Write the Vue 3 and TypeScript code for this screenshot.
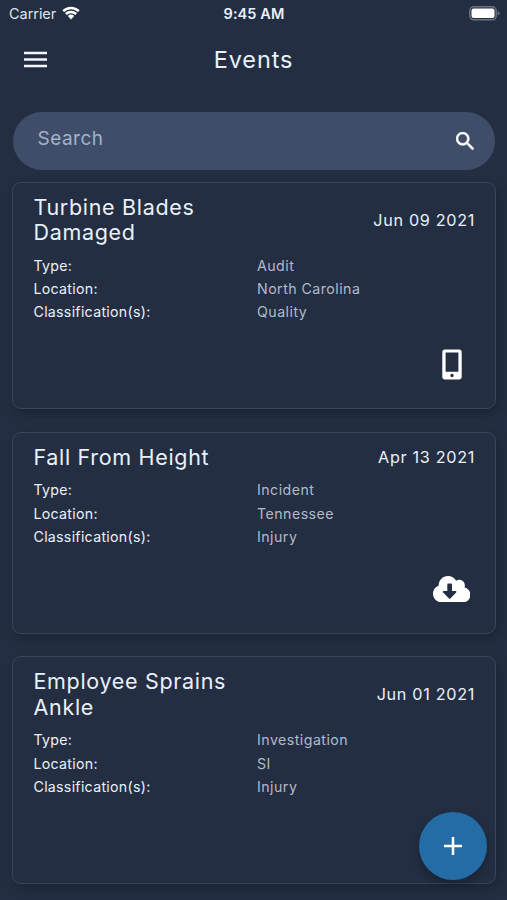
<script setup lang="ts">
interface EventItem {
  title: string[]
  date: string
  type: string
  location: string
  classification: string
  icon: 'phone' | 'cloud' | null
}

const events: EventItem[] = [
  { title: ['Turbine Blades', 'Damaged'], date: 'Jun 09 2021', type: 'Audit', location: 'North Carolina', classification: 'Quality', icon: 'phone' },
  { title: ['Fall From Height'], date: 'Apr 13 2021', type: 'Incident', location: 'Tennessee', classification: 'Injury', icon: 'cloud' },
  { title: ['Employee Sprains', 'Ankle'], date: 'Jun 01 2021', type: 'Investigation', location: 'SI', classification: 'Injury', icon: null },
]
</script>

<template>
  <div class="screen">
    <div class="status">
      <div class="carrier">
        <span>Carrier</span>
        <svg class="wifi" viewBox="0 0 18 14" width="18" height="14">
          <path d="M1.2 5.1a11.2 11.2 0 0 1 15.6 0M3.8 8a7.5 7.5 0 0 1 10.4 0" fill="none" stroke="#fff" stroke-width="2.5" />
          <path d="M9 13.4 5.8 10.1a4.7 4.7 0 0 1 6.4 0z" fill="#fff" />
        </svg>
      </div>
      <div class="clock">9:45 AM</div>
      <svg class="battery" viewBox="0 0 31 15" width="31" height="15">
        <rect x="0.8" y="0.8" width="26.4" height="13" rx="4" fill="none" stroke="#6a7280" stroke-width="1.5" />
        <rect x="2.5" y="2.5" width="23" height="9.6" rx="2" fill="#fff" />
        <path d="M28.6 5v4.6q2-.8 2-2.3t-2-2.3z" fill="#6a7280" />
      </svg>
    </div>

    <header class="navbar">
      <svg class="menu" viewBox="0 0 23 17" width="23" height="17">
        <path d="M0 2h23M0 8.5h23M0 15h23" stroke="#f3f7fc" stroke-width="2.7" />
      </svg>
      <h1>Events</h1>
    </header>

    <div class="search">
      <span>Search</span>
      <svg viewBox="3 3 17.5 17.5" width="18" height="18">
        <path fill="#fff" stroke="#fff" stroke-width="0.5" d="M15.5 14h-.79l-.28-.27A6.471 6.471 0 0 0 16 9.5 6.5 6.5 0 1 0 9.5 16c1.61 0 3.09-.59 4.23-1.57l.27.28v.79l5 4.99L20.49 19l-4.99-5zm-6 0C7.01 14 5 11.99 5 9.5S7.01 5 9.5 5 14 7.01 14 9.5 11.99 14 9.5 14z" />
      </svg>
    </div>

    <main class="list">
      <article v-for="event in events" :key="event.title[0]" class="card">
        <div class="heading">
          <h2><span v-for="line in event.title" :key="line">{{ line }}</span></h2>
          <time>{{ event.date }}</time>
        </div>
        <dl>
          <dt>Type:</dt><dd>{{ event.type }}</dd>
          <dt>Location:</dt><dd>{{ event.location }}</dd>
          <dt>Classification(s):</dt><dd>{{ event.classification }}</dd>
        </dl>
        <div class="state">
          <svg v-if="event.icon === 'phone'" viewBox="0 0 20 31" width="20" height="31">
            <path fill="#fff" fill-rule="evenodd" d="M3 .5h14a2.7 2.7 0 0 1 2.7 2.7v24.6a2.7 2.7 0 0 1-2.7 2.7H3a2.7 2.7 0 0 1-2.7-2.7V3.2A2.7 2.7 0 0 1 3 .5zM3.6 3.5v19.3h12.8V3.5zM10 24.8a1.7 1.7 0 1 0 0 3.4 1.7 1.7 0 0 0 0-3.4z" />
          </svg>
          <svg v-else-if="event.icon === 'cloud'" viewBox="0 0 640 448" width="37.5" height="26.25">
            <path fill="#fff" d="M537.6 194.6c4-10.7 6.4-22.4 6.4-34.6 0-53-43-96-96-96-19.7 0-38.1 6-53.3 16.2C367 32.2 315.3 0 256 0 167.6 0 96 71.6 96 160c0 2.7.1 5.4.2 8.1C40.2 187.8 0 241.2 0 304c0 79.5 64.5 144 144 144h368c70.7 0 128-57.3 128-128 0-61.9-44-113.6-102.4-125.4zM395.3 283.3l-100 100c-6.2 6.2-16.4 6.2-22.6 0l-100-100c-10.1-10.1-2.9-27.3 11.3-27.3h60V144c0-8.8 7.2-16 16-16h48c8.8 0 16 7.2 16 16v112h60c14.2 0 21.4 17.2 11.3 27.3z" />
          </svg>
        </div>
      </article>
    </main>

    <button class="fab" type="button" aria-label="Add event">
      <svg viewBox="0 0 18 18" width="18" height="18">
        <path d="M9 0v18M0 9h18" stroke="#fff" stroke-width="2.5" />
      </svg>
    </button>
  </div>
</template>

<style>
body {
  background: #242e42;
}
</style>

<style scoped>
.screen {
  position: relative;
  box-sizing: border-box;
  width: 507px;
  height: 900px;
  overflow: hidden;
  background: #242e42;
  color: #e9f0f9;
  font-family: Inter, "Liberation Sans", sans-serif;
}

.status {
  display: grid;
  grid-template-columns: 1fr auto 1fr;
  align-items: center;
  height: 27px;
  padding: 0 7px 0 9px;
  font-size: 14.5px;
}

.carrier {
  display: flex;
  align-items: center;
  gap: 6px;
  letter-spacing: -0.05px;
  color: #dce3ec;
}

.wifi {
  margin-top: -1px;
}

.clock {
  margin-right: 1px;
  font-weight: 600;
  letter-spacing: 0.1px;
}

.battery {
  justify-self: end;
}

.navbar {
  display: grid;
  grid-template-columns: 23px 1fr 23px;
  align-items: center;
  height: 65px;
  padding: 0 24px;
}

.menu {
  margin-left: -0.5px;
}

h1 {
  margin: 0;
  text-align: center;
  font-size: 23.5px;
  font-weight: 400;
  letter-spacing: 0.9px;
}

.search {
  display: flex;
  align-items: center;
  justify-content: space-between;
  box-sizing: border-box;
  height: 58px;
  margin: 20px 12px 0 13px;
  padding: 0 21px 0 24.5px;
  border-radius: 29px;
  background: #3f4d69;
}

.search span {
  margin-top: -5px;
  color: #a2b1cb;
  font-size: 19px;
  letter-spacing: 0.5px;
}

.list {
  display: flex;
  flex-direction: column;
  gap: 22.5px;
  padding: 11.5px 11px 0 12px;
}

.card {
  box-sizing: border-box;
  border: 1px solid #3a465b;
  border-radius: 9px;
  padding: 12px 20px 0 20.5px;
  background: #242e42;
  box-shadow: 3px 5px 9px rgba(20, 31, 43, 0.55);
}

.heading {
  display: flex;
  align-items: center;
  justify-content: space-between;
}

h2 {
  display: flex;
  flex-direction: column;
  margin: 0;
  font-size: 21.5px;
  font-weight: 400;
  line-height: 25.5px;
  letter-spacing: 0.68px;
}

time {
  font-size: 16.2px;
  line-height: 20px;
  margin-top: -1px;
  letter-spacing: 0.68px;
}

dl {
  display: grid;
  grid-template-columns: 223.5px 1fr;
  grid-auto-rows: 23.2px;
  margin: 8.3px 0 0;
  font-size: 14.2px;
  line-height: 23.2px;
}

dt {
  letter-spacing: 0.28px;
}

dd {
  margin: 0;
  color: #b0bac8;
  letter-spacing: 0.46px;
}

.state {
  display: flex;
  justify-content: center;
  align-items: center;
  width: 47px;
  height: 84.7px;
  margin-left: auto;
  box-sizing: border-box;
  padding-bottom: 2.5px;
}

.fab {
  position: absolute;
  right: 20px;
  bottom: 20px;
  display: flex;
  align-items: center;
  justify-content: center;
  width: 68px;
  height: 68px;
  padding: 0;
  border: 0;
  border-radius: 50%;
  background: #246ca6;
  box-shadow: 0 5px 8px rgba(14, 22, 34, 0.45);
}
</style>
